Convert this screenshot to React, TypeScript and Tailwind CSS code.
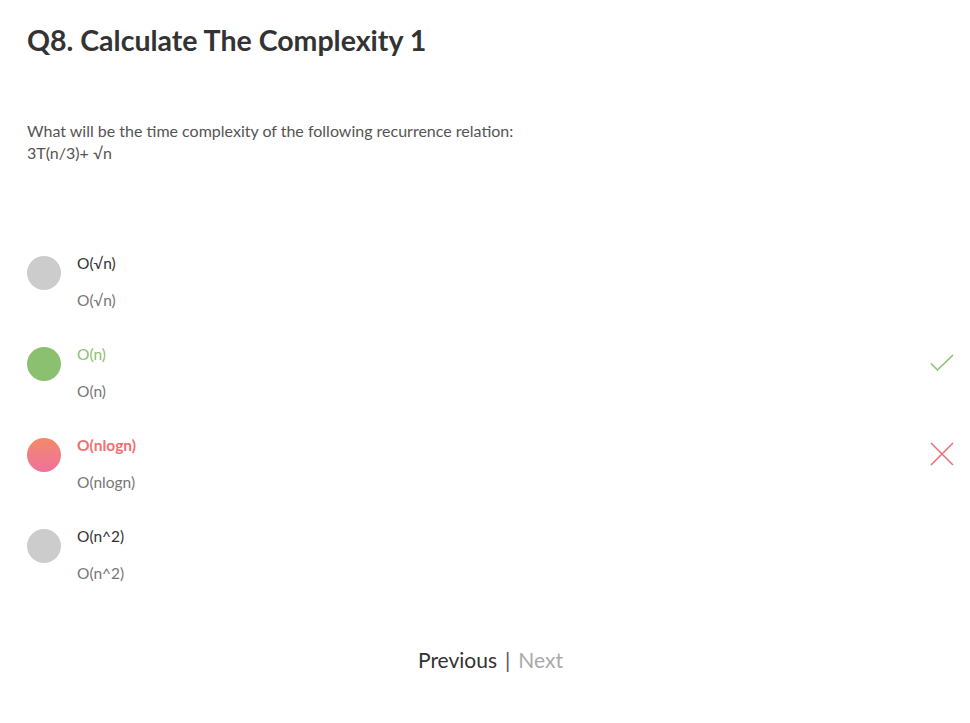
import React from 'react'

type Option = {
  label: string
  answer: string
  state: 'none' | 'correct' | 'wrong'
}

const OPTIONS: Option[] = [
  { label: 'O(√n)', answer: 'O(√n)', state: 'none' },
  { label: 'O(n)', answer: 'O(n)', state: 'correct' },
  { label: 'O(nlogn)', answer: 'O(nlogn)', state: 'wrong' },
  { label: 'O(n^2)', answer: 'O(n^2)', state: 'none' },
]

function CheckIcon() {
  return (
    <svg width="24" height="24" viewBox="0 0 24 24" fill="none" aria-hidden="true">
      <path d="M1 12.5 L7.5 19 L23 4" stroke="#8cc071" strokeWidth="1.6" />
    </svg>
  )
}

function CrossIcon() {
  return (
    <svg width="24" height="24" viewBox="0 0 24 24" fill="none" aria-hidden="true">
      <path d="M1 1 L23 23 M23 1 L1 23" stroke="#f0707a" strokeWidth="1.6" />
    </svg>
  )
}

function OptionRow({ label, answer, state }: Option) {
  const dot =
    state === 'correct'
      ? 'bg-[#8cc071]'
      : state === 'wrong'
        ? 'bg-gradient-to-b from-[#f28a68] to-[#f0709a]'
        : 'bg-[#cccccc]'
  const labelColor =
    state === 'correct'
      ? 'text-[#8cc071]'
      : state === 'wrong'
        ? 'text-[#f07070] font-bold'
        : 'text-[#333333]'

  return (
    <div className="flex items-start">
      <div className={`w-[34px] h-[34px] rounded-full mt-[3px] flex-shrink-0 ${dot}`} />
      <div className="ml-[16px] flex flex-col">
        <span className={`text-[15.5px] leading-[20px] ${labelColor}`}>{label}</span>
        <span className="text-[15.5px] leading-[20px] mt-[17px] text-[#777777]">{answer}</span>
      </div>
      <div className="ml-auto mt-[7px]">
        {state === 'correct' && <CheckIcon />}
        {state === 'wrong' && <CrossIcon />}
      </div>
    </div>
  )
}

export default function App() {
  return (
    <div className="min-h-[723px] bg-white pl-[27px] pr-[16px] font-['Lato',sans-serif]">
      <h1 className="pt-[24px] text-[28.5px] leading-[32px] font-bold text-[#333333]">
        Q8. Calculate The Complexity 1
      </h1>

      <div className="mt-[64px] text-[16px] leading-[22px] text-[#555555]">
        <p>What will be the time complexity of the following recurrence relation:</p>
        <p>3T(n/3)+ √n</p>
      </div>

      <div className="mt-[89px] flex flex-col gap-[34px]">
        {OPTIONS.map((o) => (
          <OptionRow key={o.label} {...o} />
        ))}
      </div>

      <nav className="mt-[64px] flex justify-center items-center gap-[8px] text-[21px] leading-[26px]">
        <button className="text-[#333333]">Previous</button>
        <span className="text-[#555555]">|</span>
        <button className="text-[#aaaaaa]">Next</button>
      </nav>
    </div>
  )
}
